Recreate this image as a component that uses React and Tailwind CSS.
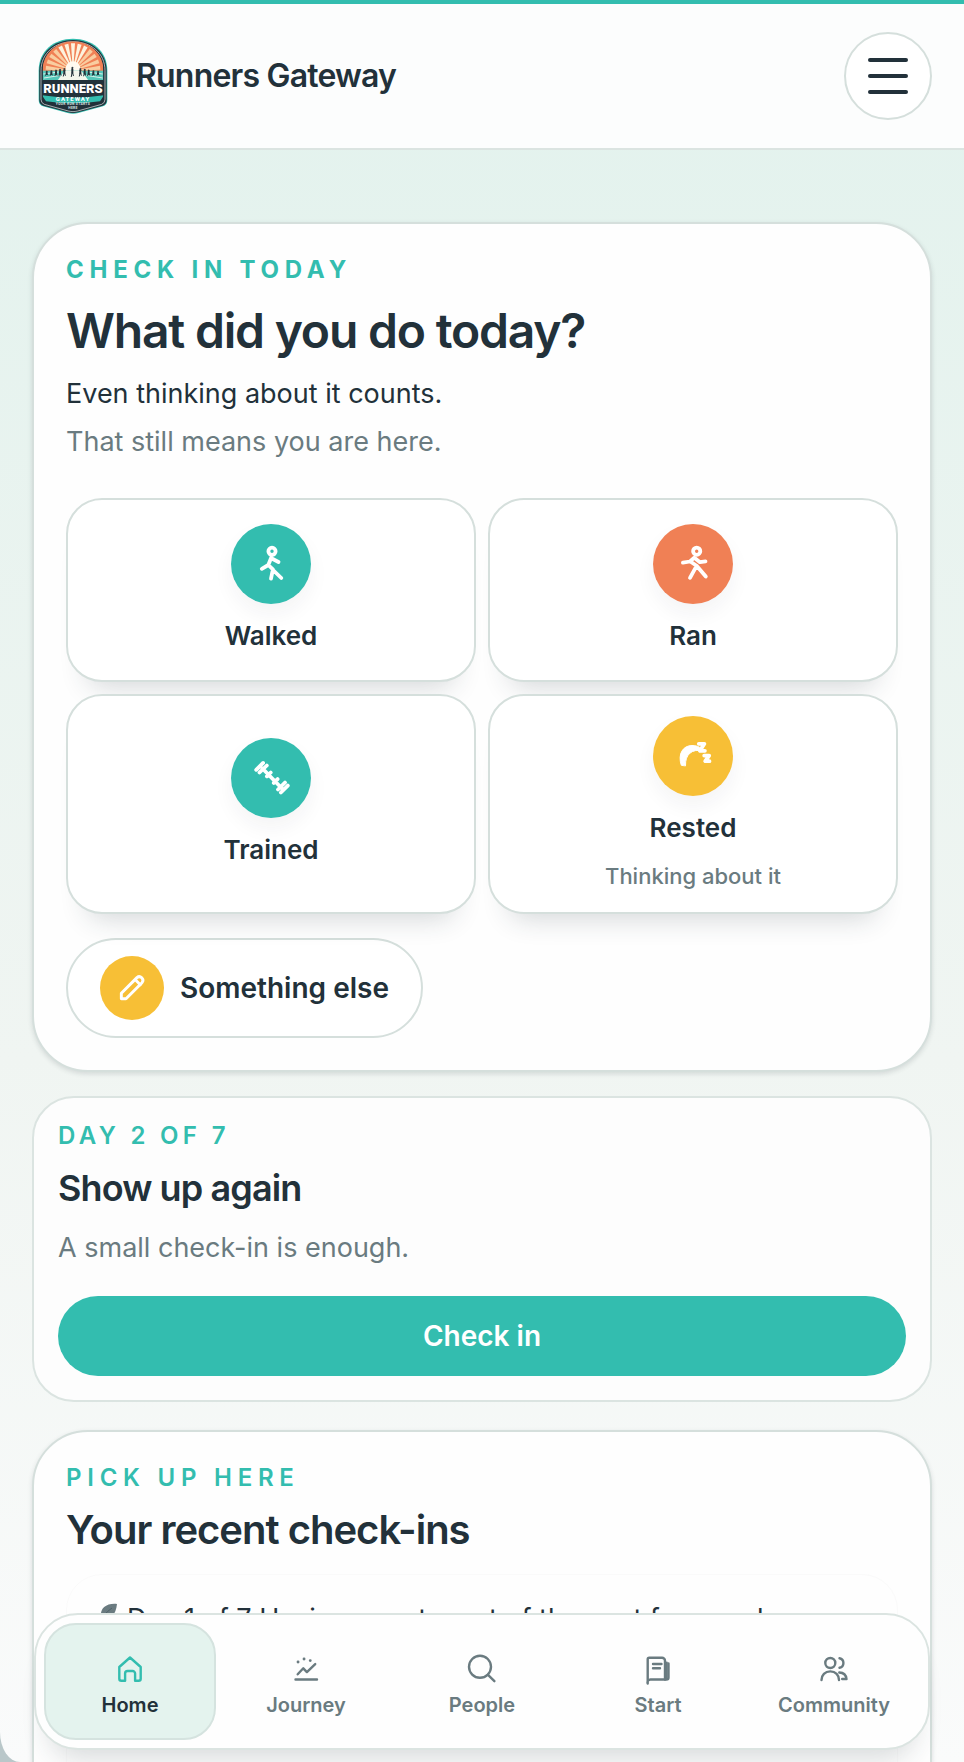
import { useState } from 'react';

const activities = [
  { id: 'walked', label: 'Walked', color: 'bg-[#33bdaf]', icon: WalkIcon },
  { id: 'ran', label: 'Ran', color: 'bg-[#f08055]', icon: RunIcon },
  { id: 'trained', label: 'Trained', color: 'bg-[#33bdaf]', icon: DumbbellIcon },
  { id: 'rested', label: 'Rested', hint: 'Thinking about it', color: 'bg-[#f7bf36]', icon: RestIcon },
];

const navItems = [
  { id: 'home', label: 'Home', icon: HomeIcon },
  { id: 'journey', label: 'Journey', icon: JourneyIcon },
  { id: 'people', label: 'People', icon: SearchIcon },
  { id: 'start', label: 'Start', icon: BookIcon },
  { id: 'community', label: 'Community', icon: CommunityIcon },
];

function Logo() {
  const rays = [-84, -70, -56, -42, -28, -14, 0, 14, 28, 42, 56, 70, 84];
  const runners = [44, 58, 72, 84, 97, 121, 145, 158, 170, 184, 198];

  return (
    <svg viewBox="0 0 240 240" className="h-20 w-20 shrink-0" aria-hidden="true">
      <defs>
        <clipPath id="badge">
          <path d="M32 100a91 84 0 0 1 182 0v88q0 9-9 13l-72 22q-10 4-20 0l-72-22q-9-4-9-13z" />
        </clipPath>
      </defs>
      <path d="M20 104C20 44 66 8 123 8s103 36 103 96v88q0 14-13 19l-74 20q-16 4-32 0l-74-20q-13-5-13-19z" fill="#33bdaf" />
      <path d="M22 106C22 48 68 12 123 12s101 36 101 94v86q0 13-12 17l-74 20q-15 4-30 0l-74-20q-12-4-12-17z" fill="#22313a" />
      <path d="M27 104C27 50 71 17 123 17s96 33 96 87v86q0 11-10 15l-72 20q-14 4-28 0l-72-20q-10-4-10-15z" fill="none" stroke="#e9efec" strokeWidth="2" />
      <g clipPath="url(#badge)">
        <rect x="30" y="14" width="186" height="92" fill="#f08055" />
        {rays.map((angle) => (
          <path key={angle} d="M121 82 117 22h12l-4 60z" fill={Math.abs(angle) < 30 ? '#fdf3de' : '#f9cda0'} transform={`rotate(${angle} 123 104)`} />
        ))}
        <circle cx="123" cy="98" r="22" fill="#fffaf0" />
        <rect x="30" y="104" width="186" height="30" fill="#55c6b8" />
        <path d="M98 104h50l22 30H76z" fill="#f3f6ec" />
        <path d="M34 114 80 108M36 126l50-8M212 114l-46-6M212 126l-50-8" stroke="#d7efe9" strokeWidth="3" />
        {runners.map((x) => {
          const h = Math.max(10, 34 - Math.abs(x - 121) / 3);
          return (
            <g key={x} stroke="#22313a" strokeLinecap="round">
              <circle cx={x} cy={112 - h / 2} r="2" fill="#22313a" />
              <path d={`M${x} ${116 - h / 2}v${h / 3}`} strokeWidth="6" />
              <path d={`m${x - 1} ${116 - h / 6}-2 ${h / 3}M${x + 1} ${116 - h / 6}l2 ${h / 4}`} strokeWidth="3" />
            </g>
          );
        })}
        <rect x="30" y="132" width="186" height="96" fill="#22313a" />
        <path d="M30 178q92 14 186 0l-12 18q-82 12-162 0z" fill="#33bdaf" />
      </g>
      <text x="123" y="172" textAnchor="middle" fontFamily="Roboto, sans-serif" fontSize="39" fontWeight="900" fill="#fff">RUNNERS</text>
      <text x="123" y="196" textAnchor="middle" fontFamily="Roboto, sans-serif" fontSize="18" fontWeight="800" letterSpacing="3" fill="#fff">GATEWAY</text>
      <text x="123" y="208" textAnchor="middle" fontFamily="Roboto, sans-serif" fontSize="10" fontWeight="700" letterSpacing="1" fill="#dfe6e4">YOUR RUN STARTS</text>
      <text x="123" y="220" textAnchor="middle" fontFamily="Roboto, sans-serif" fontSize="10" fontWeight="700" letterSpacing="1" fill="#dfe6e4">HERE</text>
    </svg>
  );
}

function ActivitySvg({ children }) {
  return (
    <svg viewBox="0 0 40 40" className="h-10 w-10" fill="none" stroke="currentColor" strokeWidth="3.8" strokeLinecap="round" strokeLinejoin="round" aria-hidden="true">
      {children}
    </svg>
  );
}

function WalkIcon() {
  return (
    <ActivitySvg>
      <circle cx="21" cy="7.3" r="3.6" />
      <path d="M20.3 13.5 17.3 21l-6.5 3.8M20.3 14.2l7.2 3.8M17.3 21l4.6 4.4L20 34.6M22 26l8.3 8" />
    </ActivitySvg>
  );
}

function RunIcon() {
  return (
    <ActivitySvg>
      <circle cx="23.7" cy="7.2" r="3.6" />
      <path d="M9.9 18.7 17 17.5l4.3-3.8 5.7 4.5 5.5-.9M18 18l5.6 3.8L17 33.8M23.6 21.8l9.2 10.8" />
    </ActivitySvg>
  );
}

function DumbbellIcon() {
  return (
    <ActivitySvg>
      <path d="m5.2 11.8 6.900-6.900M8.500 14.500 15.800 7.500M11.500 10.500l19.500 20M15.900 18.300l3.800-3.800M22.800 24.900l3.800-3.800M27 31.500l7-7M29.900 34.500l6.900-6.900" />
    </ActivitySvg>
  );
}

function RestIcon() {
  return (
    <ActivitySvg>
      <path d="M8.200 29C4.500 18 10 9.500 19 9.500c4 0 7 1 9 3l1.500 2.500C19.500 12.500 12 18 12.500 29.500z" fill="currentColor" strokeWidth="1" />
      <path d="M25.800 7.800h5.600l-4.500 7h5M31.200 19.600h5l-4 5.600h4.300" />
    </ActivitySvg>
  );
}

function PencilIcon() {
  return (
    <svg viewBox="0 0 24 24" className="h-8 w-8" fill="none" stroke="currentColor" strokeWidth="2.2" strokeLinecap="square" strokeLinejoin="round" aria-hidden="true">
      <path d="M4 20h3.500L19.500 8a2.700 2.700 0 0 0-3.800-3.800L4 16z" />
      <path d="m14.700 6 3.500 3.500" strokeLinecap="round" />
    </svg>
  );
}

function NavSvg({ children }) {
  return (
    <svg viewBox="0 0 32 32" className="h-8 w-8" fill="none" stroke="currentColor" strokeWidth="2.4" strokeLinecap="round" strokeLinejoin="round" aria-hidden="true">
      {children}
    </svg>
  );
}

function HomeIcon() {
  return (
    <NavSvg>
      <path d="M16 4.500 5.300 14v11.800a2 2 0 0 0 2 2h3.800v-7.300a2.500 2.500 0 0 1 2.500-2.500h5a2.500 2.500 0 0 1 2.500 2.500v7.300h3.600a2 2 0 0 0 2-2V14z" />
    </NavSvg>
  );
}

function JourneyIcon() {
  return (
    <NavSvg>
      <path d="M5.500 26.500h21.500M7.700 21.300l5.600-6 3.600 3.800 8.300-8" />
      <path d="M8 9h.1M14 6h.1M20.200 7.600h.1" strokeWidth="2.8" />
    </NavSvg>
  );
}

function SearchIcon() {
  return (
    <NavSvg>
      <circle cx="14" cy="13.8" r="11" />
      <path d="m22 21.800 6.400 6.400" />
    </NavSvg>
  );
}

function BookIcon() {
  return (
    <NavSvg>
      <path d="M5.700 30.500V6.200a1.500 1.500 0 0 1 1.500-1.500H20a3 3 0 0 1 3 3v18.800H9a3 3 0 0 0-3.300 4z" />
      <path d="M26.500 10.500v14a2 2 0 0 1-2 2H23" />
      <path d="M11 11h8.500M11 15.300h7" />
      <path d="M24.800 9.500v16" strokeWidth="2" />
    </NavSvg>
  );
}

function CommunityIcon() {
  return (
    <NavSvg>
      <circle cx="12.3" cy="10" r="5" />
      <path d="M3.500 27c0-5 3.500-8.600 8.800-8.600S21 22 21 27M21.500 5.200a4.900 4.900 0 0 1 0 9.600M21.300 19.500c4 .2 6.800 2.500 7.200 6.500h-4.300" />
    </NavSvg>
  );
}

function LeafIcon() {
  return (
    <svg viewBox="0 0 24 24" className="mt-1 h-6 w-6 shrink-0" aria-hidden="true">
      <path d="M22 1C12 0 5 5 6 13c0 2 .5 3 1 4 8 0 14-5 15-16z" fill="#6a7b80" />
      <path d="M3 22C6 15 11 9 17 5" fill="none" stroke="#51636a" strokeWidth="1" />
    </svg>
  );
}

function Eyebrow({ className, children }) {
  return <p className={`text-2xl leading-7 text-[#33bdaf] uppercase ${className}`}>{children}</p>;
}

function ActivityButton({ activity, selected, onSelect }) {
  const Icon = activity.icon;

  return (
    <button
      type="button"
      aria-pressed={selected}
      onClick={() => onSelect(activity.id)}
      className="flex min-h-[184px] flex-col items-center justify-center rounded-[36px] border-2 border-[#d5dfdc] bg-white px-4 py-5 shadow-[0_26px_28px_-22px_rgba(34,49,58,0.2)]"
    >
      <span className={`flex h-20 w-20 items-center justify-center rounded-full text-white shadow-[0_10px_20px_rgba(34,49,58,0.05)] ${activity.color}`}>
        <Icon />
      </span>
      <span className="mt-3 text-[26px] leading-10 font-semibold">{activity.label}</span>
      {activity.hint ? <span className="mt-3 text-[22px] leading-8 font-medium text-[#6a7b80]">{activity.hint}</span> : null}
    </button>
  );
}

function BottomNav({ active, onChange }) {
  return (
    <nav className="absolute inset-x-[34px] bottom-3 grid grid-cols-5 gap-1 rounded-[44px] border-2 border-[#dbe4e1] bg-[#fefefe] p-2 shadow-[0_24px_28px_-16px_rgba(34,49,58,0.18)]">
      {navItems.map((item) => {
        const Icon = item.icon;
        const isActive = item.id === active;
        return (
          <a
            key={item.id}
            href={`#${item.id}`}
            aria-current={isActive ? 'page' : undefined}
            onClick={() => onChange(item.id)}
            className={`flex h-[117px] flex-col items-center rounded-[32px] border-2 pt-7 ${isActive ? 'border-[#d5e3df] bg-[#e4f3ee] text-[#22313a]' : 'border-transparent text-[#6a7b80]'}`}
          >
            <span className={isActive ? 'text-[#33bdaf]' : ''}>
              <Icon />
            </span>
            <span className="mt-2 text-xl leading-6 font-semibold">{item.label}</span>
          </a>
        );
      })}
    </nav>
  );
}

export default function App() {
  const [selected, setSelected] = useState(null);
  const [tab, setTab] = useState('home');

  return (
    <div className="bg-[#b9c7c9]">
      <div className="relative flex h-screen flex-col overflow-hidden rounded-bl-[20px_30px] bg-linear-to-b from-[#e2f2ed] via-[#f0f5f2] via-60% to-[#fafbfb] font-['Inter',sans-serif] text-[#22313a]">
        <header className="flex shrink-0 items-center justify-between border-t-4 border-b-2 border-t-[#33bdaf] border-b-[#dbe4e1] bg-[#fcfdfd] px-8 py-7">
          <a href="#home" className="flex items-center gap-6">
            <Logo />
            <span className="text-[32px] leading-10 font-semibold tracking-tight">Runners Gateway</span>
          </a>
          <button type="button" aria-label="Open menu" className="flex h-[88px] w-[88px] flex-col items-center justify-center gap-3 rounded-full border-2 border-[#d5dfdc] bg-white">
            <span className="h-1 w-10 rounded-full bg-[#22313a]" />
            <span className="h-1 w-10 rounded-full bg-[#22313a]" />
            <span className="h-1 w-10 rounded-full bg-[#22313a]" />
          </button>
        </header>

        <main className="min-h-0 flex-1 overflow-y-auto px-8 pt-[72px] pb-40 [scrollbar-width:none]">
          <section className="rounded-[56px] border-2 border-[#d5dfdc] bg-[#fefefe] p-8 shadow-[0_2px_5px_rgba(34,49,58,0.14)]">
            <Eyebrow className="font-bold tracking-[0.24em]">Check in today</Eyebrow>
            <h1 className="mt-5 text-5xl leading-[54px] font-semibold tracking-tight">What did you do today?</h1>
            <p className="mt-4 text-[27px] leading-10">Even thinking about it counts.</p>
            <p className="mt-2 text-[27px] leading-10 text-[#6a7b80]">That still means you are here.</p>

            <div className="mt-9 grid grid-cols-2 gap-3">
              {activities.map((activity) => (
                <ActivityButton key={activity.id} activity={activity} selected={selected === activity.id} onSelect={setSelected} />
              ))}
            </div>

            <button
              type="button"
              onClick={() => setSelected('other')}
              className="mt-6 flex items-center gap-4 rounded-full border-2 border-[#d5dfdc] bg-white px-8 py-4 text-[28px] leading-10 font-semibold"
            >
              <span className="flex h-16 w-16 items-center justify-center rounded-full bg-[#f7bf36] text-white">
                <PencilIcon />
              </span>
              Something else
            </button>
          </section>

          <section className="mt-6 rounded-[42px] border-2 border-[#dbe4e1] bg-[#fdfdfd] p-6">
            <Eyebrow className="font-semibold tracking-[0.18em]">Day 2 of 7</Eyebrow>
            <h2 className="mt-4 text-4xl leading-11 font-semibold tracking-tight">Show up again</h2>
            <p className="mt-4 text-[27px] leading-11 text-[#6a7b80]">A small check-in is enough.</p>
            <button type="button" className="mt-[26px] h-20 w-full rounded-full bg-[#33bdaf] text-[28px] leading-10 font-semibold text-white">
              Check in
            </button>
          </section>

          <section className="mt-7 rounded-[56px] border-2 border-[#d5dfdc] bg-[#fefefe] p-8 shadow-[0_2px_5px_rgba(34,49,58,0.14)]">
            <Eyebrow className="font-semibold tracking-[0.24em]">Pick up here</Eyebrow>
            <h2 className="mt-[14px] text-[40px] leading-12 font-semibold tracking-tight">Your recent check-ins</h2>
            <article className="mt-5 flex min-h-60 items-start gap-2 rounded-[36px] border border-[#fafafa] bg-[#fefefe] px-7 py-6">
              <LeafIcon />
              <p className="text-[27px] leading-10">Day 1 of 7 Having spent most of the past few weeks</p>
            </article>
          </section>
        </main>

        <BottomNav active={tab} onChange={setTab} />
      </div>
    </div>
  );
}
